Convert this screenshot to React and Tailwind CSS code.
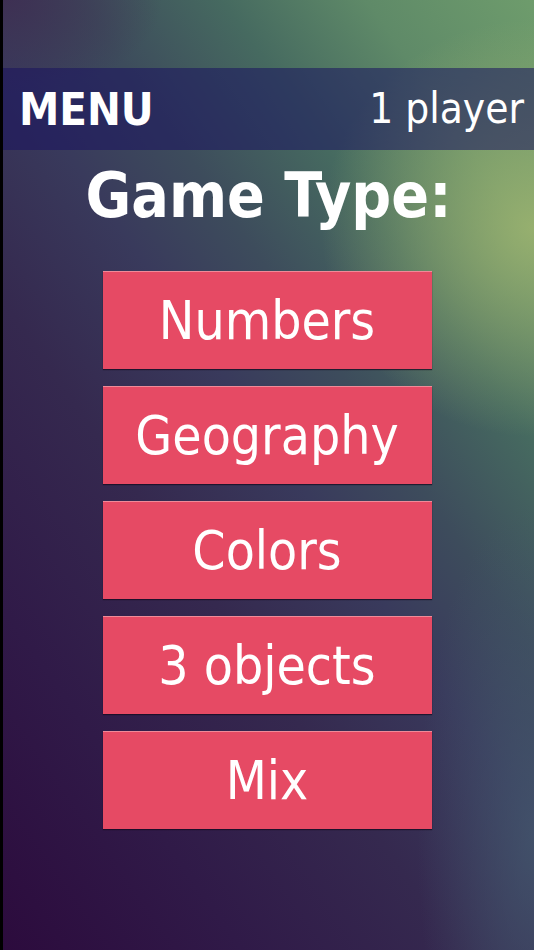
import React from 'react';

const gameTypes = ['Numbers', 'Geography', 'Colors', '3 objects', 'Mix'];

const font = { condensed: 'font-["DejaVu_Sans_Condensed","DejaVu_Sans",sans-serif]' };

export default function App() {
  return (
    <div
      className={`w-[534px] h-[950px] overflow-hidden border-l-[3px] border-black text-white ${font.condensed} bg-[radial-gradient(ellipse_40%_22%_at_100%_24%,rgba(160,182,112,0.85),transparent_100%),radial-gradient(ellipse_30%_10%_at_0%_0%,rgba(62,46,82,0.9),transparent_100%),radial-gradient(ellipse_22%_35%_at_100%_88%,rgba(68,88,110,0.75),transparent_100%),linear-gradient(235deg,#6e9c6c_0%,#5f8a68_14%,#466a60_26%,#3d4c5c_38%,#393a5c_48%,#35294f_62%,#301a48_80%,#2c0b3d_100%)]`}
    >
      {/* top bar */}
      <div className="mt-[68px] h-[82px] flex items-center justify-between pl-[16px] pr-[10px] bg-[rgba(25,18,95,0.55)]">
        <span className="text-[45px] font-bold leading-none">MENU</span>
        <span className="text-[42px] leading-none">1 player</span>
      </div>

      {/* title */}
      <div className="h-[121px] flex items-start justify-center pt-[15px]">
        <h1 className="text-[62px] font-bold leading-none">Game Type:</h1>
      </div>

      {/* game type buttons */}
      <div className="flex flex-col items-center gap-[17px] pr-[3px]">
        {gameTypes.map(name => (
          <button
            key={name}
            className="w-[329px] h-[98px] bg-[#e64a64] border-t border-[#f08a98] shadow-[0_1px_1px_rgba(20,10,30,0.7)] flex items-center justify-center text-[53px] leading-none"
          >
            {name}
          </button>
        ))}
      </div>
    </div>
  );
}
